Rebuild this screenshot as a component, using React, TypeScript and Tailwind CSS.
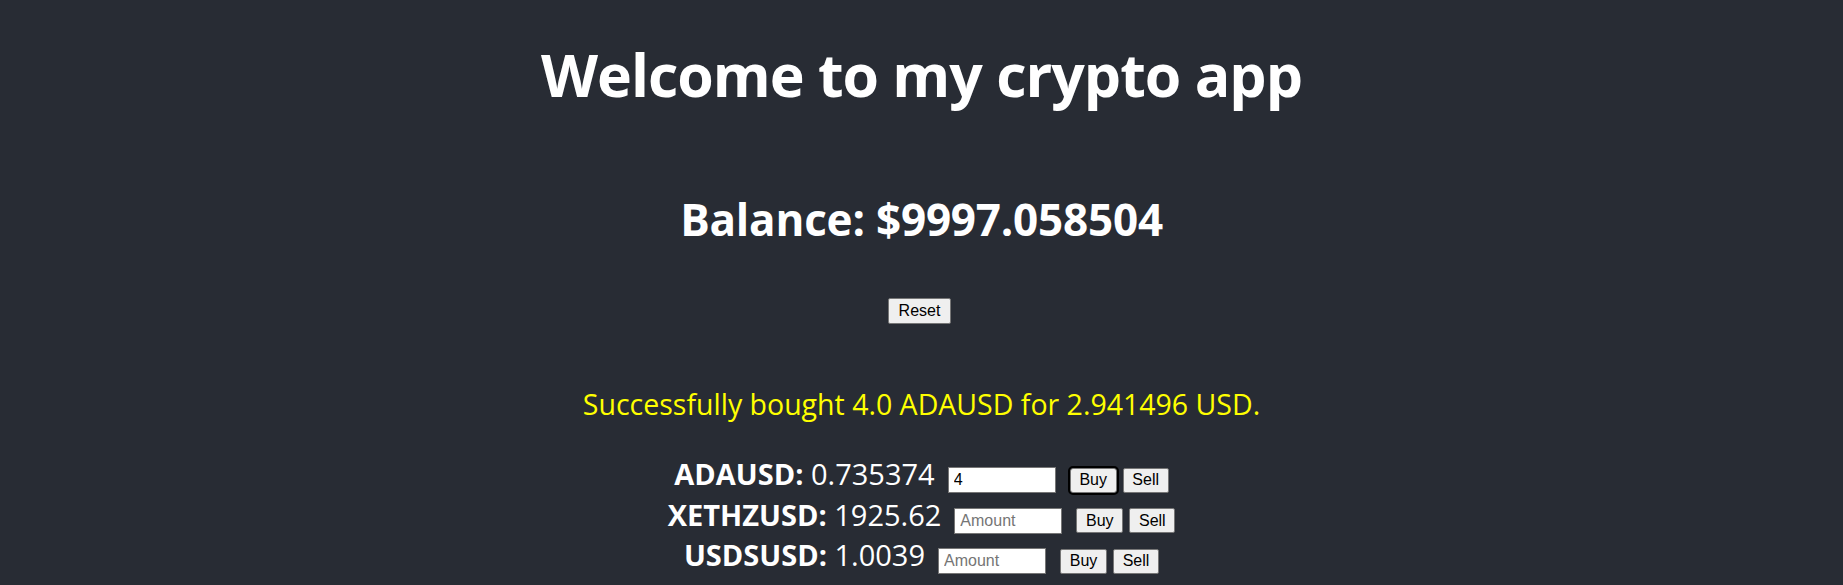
import React from 'react';

const coins = [
  { name: 'ADAUSD', price: '0.735374', amount: '4', focused: true },
  { name: 'XETHZUSD', price: '1925.62', amount: '', focused: false },
  { name: 'USDSUSD', price: '1.0039', amount: '', focused: false },
  { name: 'XXRPZUSD', price: '0.41986', amount: '', focused: false },
];

const btn =
  "h-[25px] px-[8px] bg-[#efefef] border border-[#767676] rounded-[2px] text-black text-[16px] leading-[18px] font-['Liberation_Sans',Arial,sans-serif]";

export default function App() {
  return (
    <div className="min-h-screen bg-[#282c34] text-white font-['Open_Sans',sans-serif] flex flex-col items-center">
      <h1 className="mt-[34px] text-[59px] leading-[80px] font-bold tracking-[-1px]">Welcome to my crypto app</h1>
      <h2 className="mt-[75px] text-[44px] leading-[60px] font-bold tracking-[-0.2px]">Balance: $9997.058504</h2>
      <button className={btn + ' mt-[49px] -ml-[4px] w-[63px] h-[26px]'}>Reset</button>
      <p className="mt-[60px] text-[28.5px] leading-[40px] text-[#ffff00]">
        Successfully bought 4.0 ADAUSD for 2.941496 USD.
      </p>
      <div className="mt-[30px] flex flex-col items-center">
        {coins.map((c) => (
          <div key={c.name} className="flex items-baseline h-[40.5px] text-[29px] leading-[40.5px]">
            <span>
              <b className="font-bold">{c.name}:</b> {c.price}
            </span>
            <input
              defaultValue={c.amount}
              placeholder="Amount"
              className="ml-[13px] w-[108px] h-[26px] px-[5px] bg-white border border-[#767676] text-black text-[16px] leading-[18px] placeholder:text-[#757575] font-['Liberation_Sans',Arial,sans-serif] outline-none"
            />
            <button
              className={
                btn +
                ' ml-[14px] w-[47px] ' +
                (c.focused ? 'outline-2 outline-black outline-offset-0 rounded-[3px]' : '')
              }
            >
              Buy
            </button>
            <button className={btn + ' ml-[6px] w-[46px]'}>Sell</button>
          </div>
        ))}
      </div>
    </div>
  );
}
